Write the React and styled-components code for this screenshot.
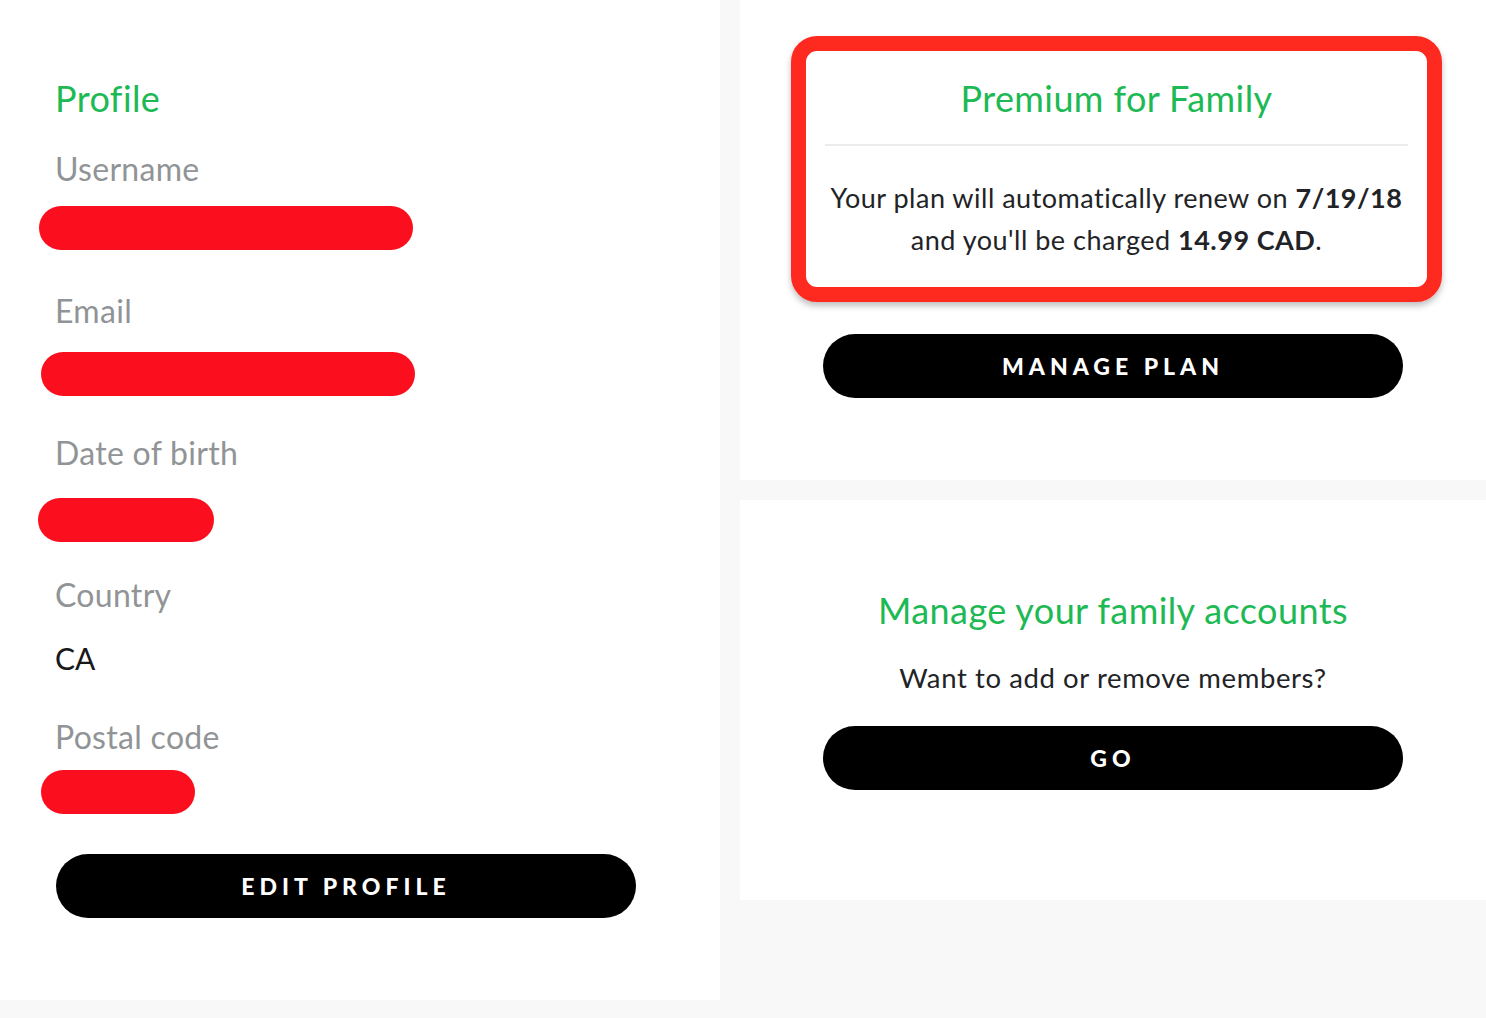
import React from 'react';
import styled, { createGlobalStyle } from 'styled-components';

const GlobalStyle = createGlobalStyle`
  html, body {
    margin: 0;
    padding: 0;
    background: #f8f8f8;
    font-family: Lato, "Open Sans", Arial, sans-serif;
  }
`;

const Page = styled.div`
  display: flex;
  align-items: flex-start;
  gap: 20px;
  width: 1486px;
  min-height: 1018px;
  background: #f8f8f8;
`;

const ProfilePanel = styled.section`
  display: flex;
  flex-direction: column;
  align-items: flex-start;
  width: 720px;
  height: 1000px;
  box-sizing: border-box;
  padding: 76px 0 0 55px;
  background: #fff;
`;

const RightColumn = styled.div`
  display: flex;
  flex-direction: column;
  gap: 20px;
  width: 746px;
`;

const Card = styled.section`
  display: flex;
  flex-direction: column;
  align-items: center;
  height: ${p => p.$h}px;
  box-sizing: border-box;
  padding-top: ${p => p.$top}px;
  background: #fff;
`;

const Heading = styled.h2`
  margin: 0;
  height: 44px;
  line-height: 44px;
  font-size: 36px;
  font-weight: 400;
  color: #1db954;
  letter-spacing: 0.4px;
  white-space: nowrap;
`;

const Label = styled.div`
  height: 44px;
  line-height: 44px;
  font-size: 32px;
  letter-spacing: 0.3px;
  color: #919496;
  margin-top: ${p => p.$mt}px;
`;

const Value = styled.div`
  height: 44px;
  line-height: 44px;
  font-size: 30px;
  color: #181818;
  margin-top: ${p => p.$mt}px;
`;

const Redacted = styled.div`
  width: ${p => p.$w}px;
  height: 44px;
  border-radius: 22px;
  background: #fb0f1f;
  margin-top: ${p => p.$mt}px;
  margin-left: ${p => p.$ml}px;
`;

const PillButton = styled.button`
  width: 580px;
  height: 64px;
  border: 0;
  border-radius: 32px;
  background: #000;
  color: #fff;
  font-family: Lato, "Open Sans", Arial, sans-serif;
  font-size: 23px;
  font-weight: 900;
  letter-spacing: 5px;
  text-transform: uppercase;
  margin-top: ${p => p.$mt}px;
  margin-left: ${p => p.$ml || 0}px;
  cursor: pointer;
`;

const Highlight = styled.div`
  width: 651px;
  height: 266px;
  box-sizing: border-box;
  margin-left: 51px;
  align-self: flex-start;
  border: 15px solid #ff2a1f;
  border-radius: 26px;
  box-shadow: 0 4px 6px rgba(0, 0, 0, 0.25);
  display: flex;
  flex-direction: column;
  align-items: center;
  padding-top: 25px;
`;

const Divider = styled.hr`
  width: 583px;
  border: 0;
  border-top: 2px solid #ececec;
  margin: 24px 0 0;
`;

const PlanText = styled.p`
  margin: 31px 0 0;
  font-size: 27px;
  letter-spacing: 0.5px;
  line-height: 42px;
  color: #222326;
  text-align: center;
  white-space: nowrap;

  b {
    font-weight: 700;
  }
`;

const SubText = styled.p`
  margin: 26px 0 0;
  font-size: 27.5px;
  letter-spacing: 0.6px;
  line-height: 40px;
  color: #222326;
`;

function App() {
  return (
    <>
      <GlobalStyle />
      <Page>
        <ProfilePanel>
          <Heading>Profile</Heading>
          <Label $mt={27}>Username</Label>
          <Redacted $w={374} $mt={15} $ml={-16} />
          <Label $mt={39}>Email</Label>
          <Redacted $w={374} $mt={19} $ml={-14} />
          <Label $mt={35}>Date of birth</Label>
          <Redacted $w={176} $mt={23} $ml={-17} />
          <Label $mt={31}>Country</Label>
          <Value $mt={19}>CA</Value>
          <Label $mt={35}>Postal code</Label>
          <Redacted $w={154} $mt={11} $ml={-14} />
          <PillButton $mt={40} $ml={1}>Edit profile</PillButton>
        </ProfilePanel>
        <RightColumn>
          <Card $h={480} $top={36}>
            <Highlight>
              <Heading>Premium for Family</Heading>
              <Divider />
              <PlanText>
                Your plan will automatically renew on <b>7/19/18</b>
                <br />
                and you'll be charged <b>14.99 CAD</b>.
              </PlanText>
            </Highlight>
            <PillButton $mt={32}>Manage plan</PillButton>
          </Card>
          <Card $h={400} $top={88}>
            <Heading>Manage your family accounts</Heading>
            <SubText>Want to add or remove members?</SubText>
            <PillButton $mt={28}>Go</PillButton>
          </Card>
        </RightColumn>
      </Page>
    </>
  );
}

export default App;
